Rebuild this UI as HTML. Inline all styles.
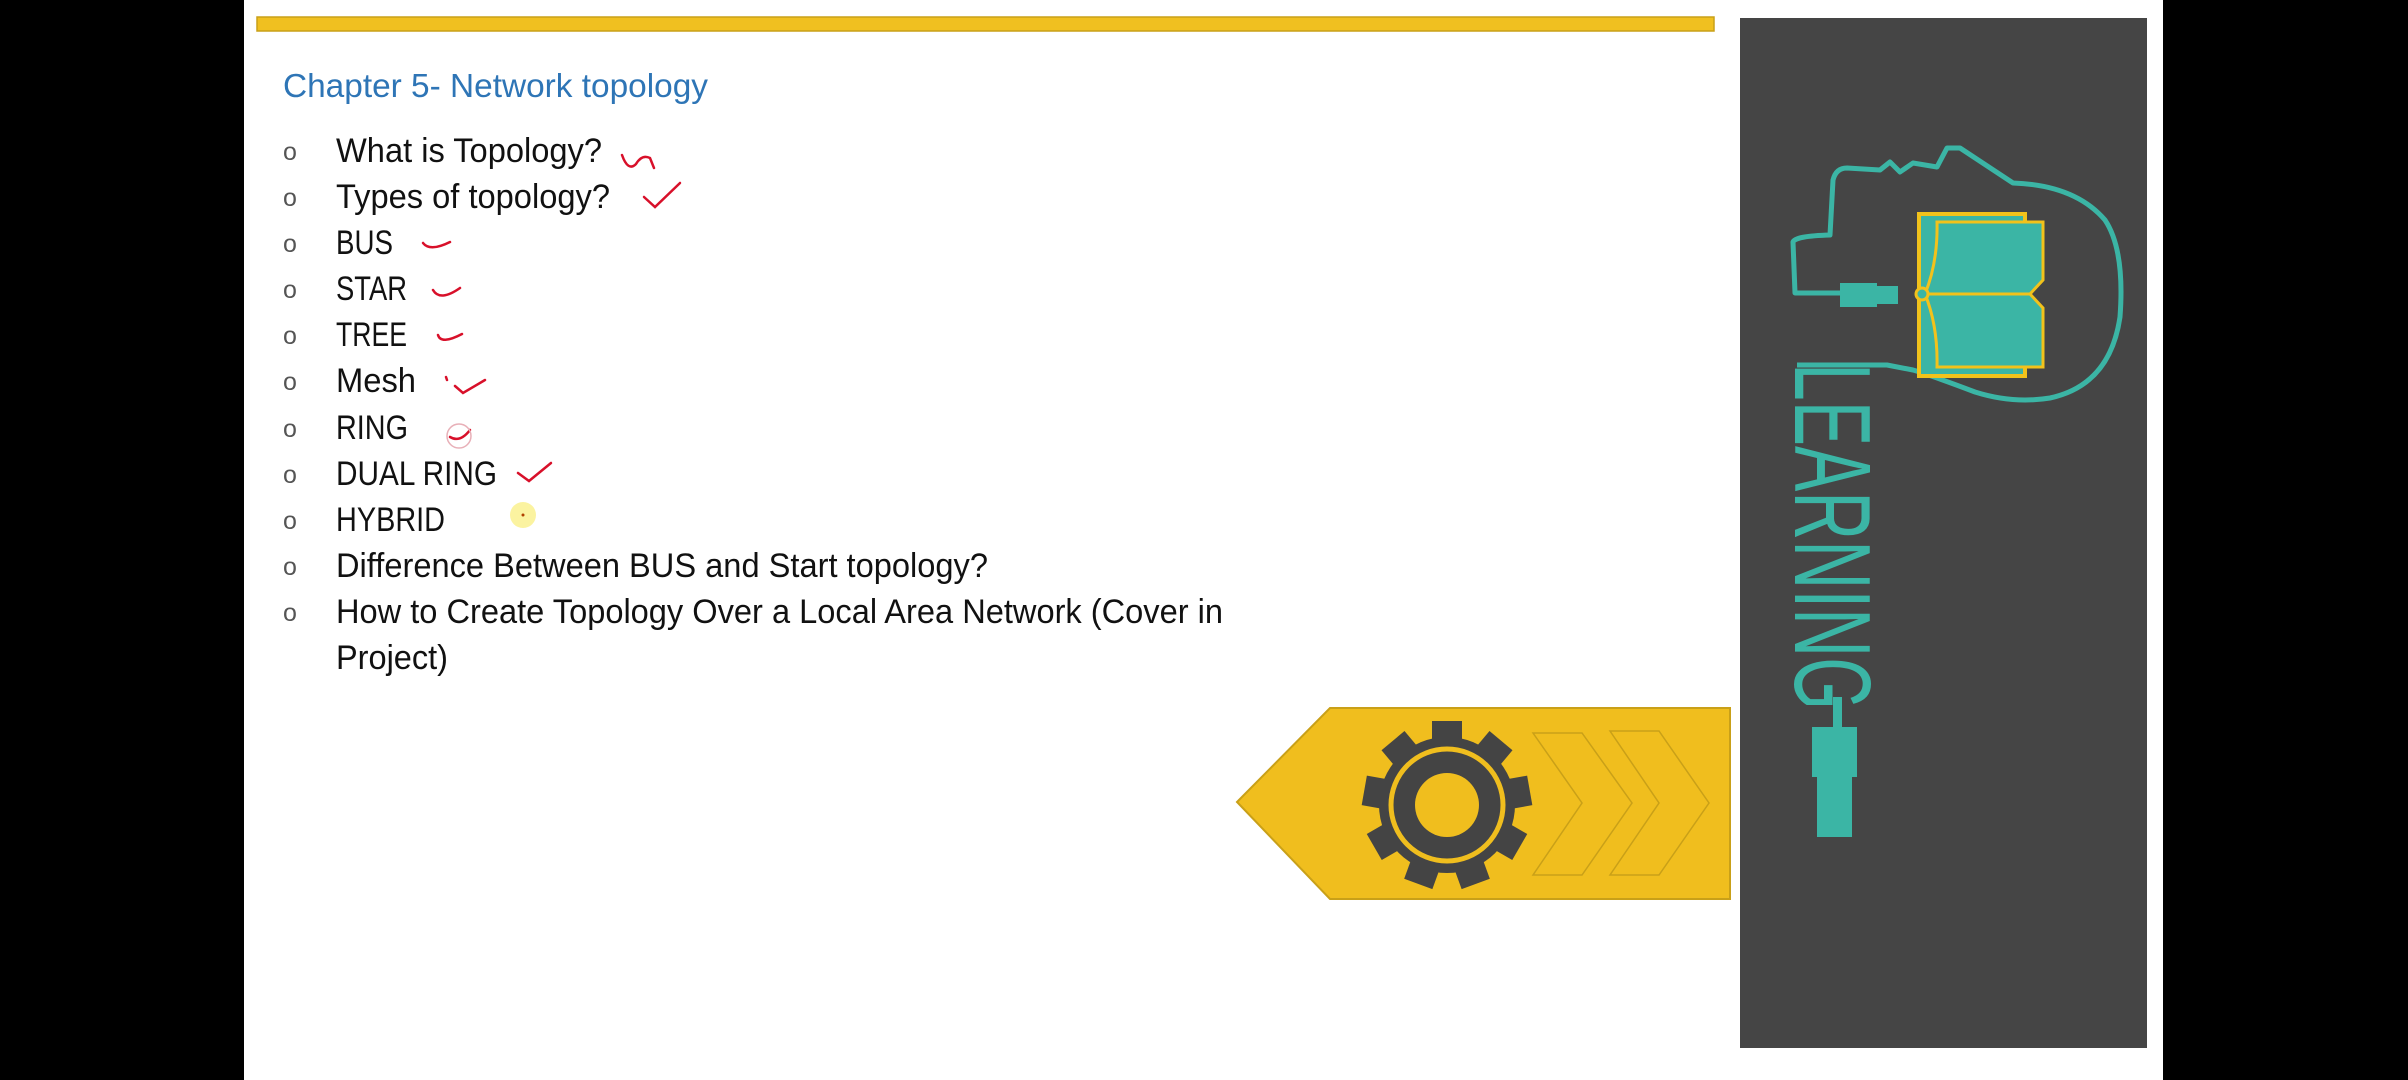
<!DOCTYPE html>
<html><head><meta charset="utf-8"><style>html,body{margin:0;padding:0;background:#000}svg{display:block}</style></head>
<body>
<svg width="2408" height="1080" viewBox="0 0 2408 1080" xmlns="http://www.w3.org/2000/svg">
<rect width="2408" height="1080" fill="#000"/>
<rect x="244" y="0" width="1919" height="1080" fill="#fff"/>
<rect x="257" y="17" width="1457" height="14" fill="#f0c020" stroke="#c9a018" stroke-width="1.5"/>
<g font-family="Liberation Sans, sans-serif">
<text x="283" y="97" font-size="33" fill="#2e75b6" textLength="425" lengthAdjust="spacingAndGlyphs">Chapter 5- Network topology</text>
<g font-size="25" fill="#555">
<text x="283" y="160">o</text><text x="283" y="206">o</text><text x="283" y="252">o</text><text x="283" y="298">o</text><text x="283" y="344">o</text><text x="283" y="390">o</text><text x="283" y="437">o</text><text x="283" y="483">o</text><text x="283" y="529">o</text><text x="283" y="575">o</text><text x="283" y="621">o</text>
</g>
<g font-size="34" fill="#111">
<text x="336" y="162" textLength="266" lengthAdjust="spacingAndGlyphs">What is Topology?</text>
<text x="336" y="208" textLength="274" lengthAdjust="spacingAndGlyphs">Types of topology?</text>
<text x="336" y="254" textLength="57" lengthAdjust="spacingAndGlyphs">BUS</text>
<text x="336" y="300" textLength="71" lengthAdjust="spacingAndGlyphs">STAR</text>
<text x="336" y="346" textLength="71" lengthAdjust="spacingAndGlyphs">TREE</text>
<text x="336" y="392" textLength="80" lengthAdjust="spacingAndGlyphs">Mesh</text>
<text x="336" y="439" textLength="72" lengthAdjust="spacingAndGlyphs">RING</text>
<text x="336" y="485" textLength="161" lengthAdjust="spacingAndGlyphs">DUAL RING</text>
<text x="336" y="531" textLength="109" lengthAdjust="spacingAndGlyphs">HYBRID</text>
<text x="336" y="577" textLength="652" lengthAdjust="spacingAndGlyphs">Difference Between BUS and Start topology?</text>
<text x="336" y="623" textLength="887" lengthAdjust="spacingAndGlyphs">How to Create Topology Over a Local Area Network (Cover in</text>
<text x="336" y="669" textLength="112" lengthAdjust="spacingAndGlyphs">Project)</text>
</g>
</g>
<g fill="none" stroke="#d8102a" stroke-width="2.5" stroke-linecap="round">
<path d="M622,155 Q628,172 636,164 Q642,154 650,158 L654,168"/>
<path d="M644,197 L655,207 L680,183"/>
<path d="M423,243 Q430,252 450,242"/>
<path d="M433,290 Q440,302 460,288"/>
<path d="M438,335 Q441,345 462,334"/>
<path d="M455,386 L463,393 L485,380"/>
<path d="M446,377 l1,3"/>
<path d="M450,437 Q460,443 470,430"/>
<path d="M518,473 L529,481 L551,463"/>
</g>
<circle cx="459" cy="436" r="12" fill="none" stroke="#e8b0b8" stroke-width="1.5"/>
<circle cx="523" cy="515" r="13" fill="#fbf3a0"/>
<circle cx="523" cy="515" r="1.5" fill="#b04000"/>
<polygon points="1237,802 1330,708 1730,708 1730,899 1330,899" fill="#f0be1e" stroke="#c9a018" stroke-width="2"/>
<g fill="none" stroke="#c9a018" stroke-width="1.5">
<polygon points="1533,733 1582,733 1632,803 1582,875 1533,875 1582,803"/>
<polygon points="1610,731 1659,731 1709,803 1659,875 1610,875 1659,803"/>
</g>
<g transform="translate(1447,805)">
<g fill="#444">
<circle r="68"/>
<rect x="-15" y="-84" width="30" height="30" transform="rotate(0)"/>
<rect x="-15" y="-84" width="30" height="30" transform="rotate(40)"/>
<rect x="-15" y="-84" width="30" height="30" transform="rotate(80)"/>
<rect x="-15" y="-84" width="30" height="30" transform="rotate(120)"/>
<rect x="-15" y="-84" width="30" height="30" transform="rotate(160)"/>
<rect x="-15" y="-84" width="30" height="30" transform="rotate(200)"/>
<rect x="-15" y="-84" width="30" height="30" transform="rotate(240)"/>
<rect x="-15" y="-84" width="30" height="30" transform="rotate(280)"/>
<rect x="-15" y="-84" width="30" height="30" transform="rotate(320)"/>
</g>
<circle r="56" fill="none" stroke="#f0be1e" stroke-width="5"/>
<circle r="32" fill="#f0be1e"/>
</g>
<rect x="1740" y="18" width="407" height="1030" fill="#454545"/>
<path d="M1840,293 L1795,293 L1793,242 Q1795,236 1830,235 L1833,180 Q1836,168 1847,168 L1880,170 L1890,162 L1900,172 L1913,163 L1937,167 L1947,148 L1960,148 L2013,183 Q2075,185 2105,220 Q2125,250 2120,317 Q2110,385 2050,398 Q2013,404 1975,392 Q1930,375 1913,370 L1887,365 L1797,365" fill="none" stroke="#3bb5a5" stroke-width="5" stroke-linejoin="round"/>
<rect x="1840" y="283" width="37" height="24" fill="#3bb5a5"/>
<rect x="1877" y="286" width="21" height="18" fill="#3bb5a5"/>
<rect x="1919" y="214" width="106" height="162" fill="#3bb5a5" stroke="#f2c21b" stroke-width="4"/>
<g fill="#3bb5a5" stroke="#f2c21b" stroke-width="3">
<path d="M1925,294 Q1938,262 1937,222 L2043,222 L2043,280 L2030,294 Z"/>
<path d="M1925,294 Q1938,326 1937,367 L2043,367 L2043,308 L2030,294 Z"/>
</g>
<circle cx="1922" cy="294" r="6" fill="#3bb5a5" stroke="#f2c21b" stroke-width="3"/>
<text transform="translate(1795,363) rotate(90)" font-family="Liberation Sans, sans-serif" font-size="109" fill="#3bb5a5" textLength="347" lengthAdjust="spacingAndGlyphs">LEARNING</text>
<rect x="1833" y="697" width="9" height="32" fill="#3bb5a5"/>
<rect x="1812" y="727" width="45" height="50" fill="#3bb5a5"/>
<rect x="1817" y="777" width="35" height="60" fill="#3bb5a5"/>
</svg>
</body></html>
